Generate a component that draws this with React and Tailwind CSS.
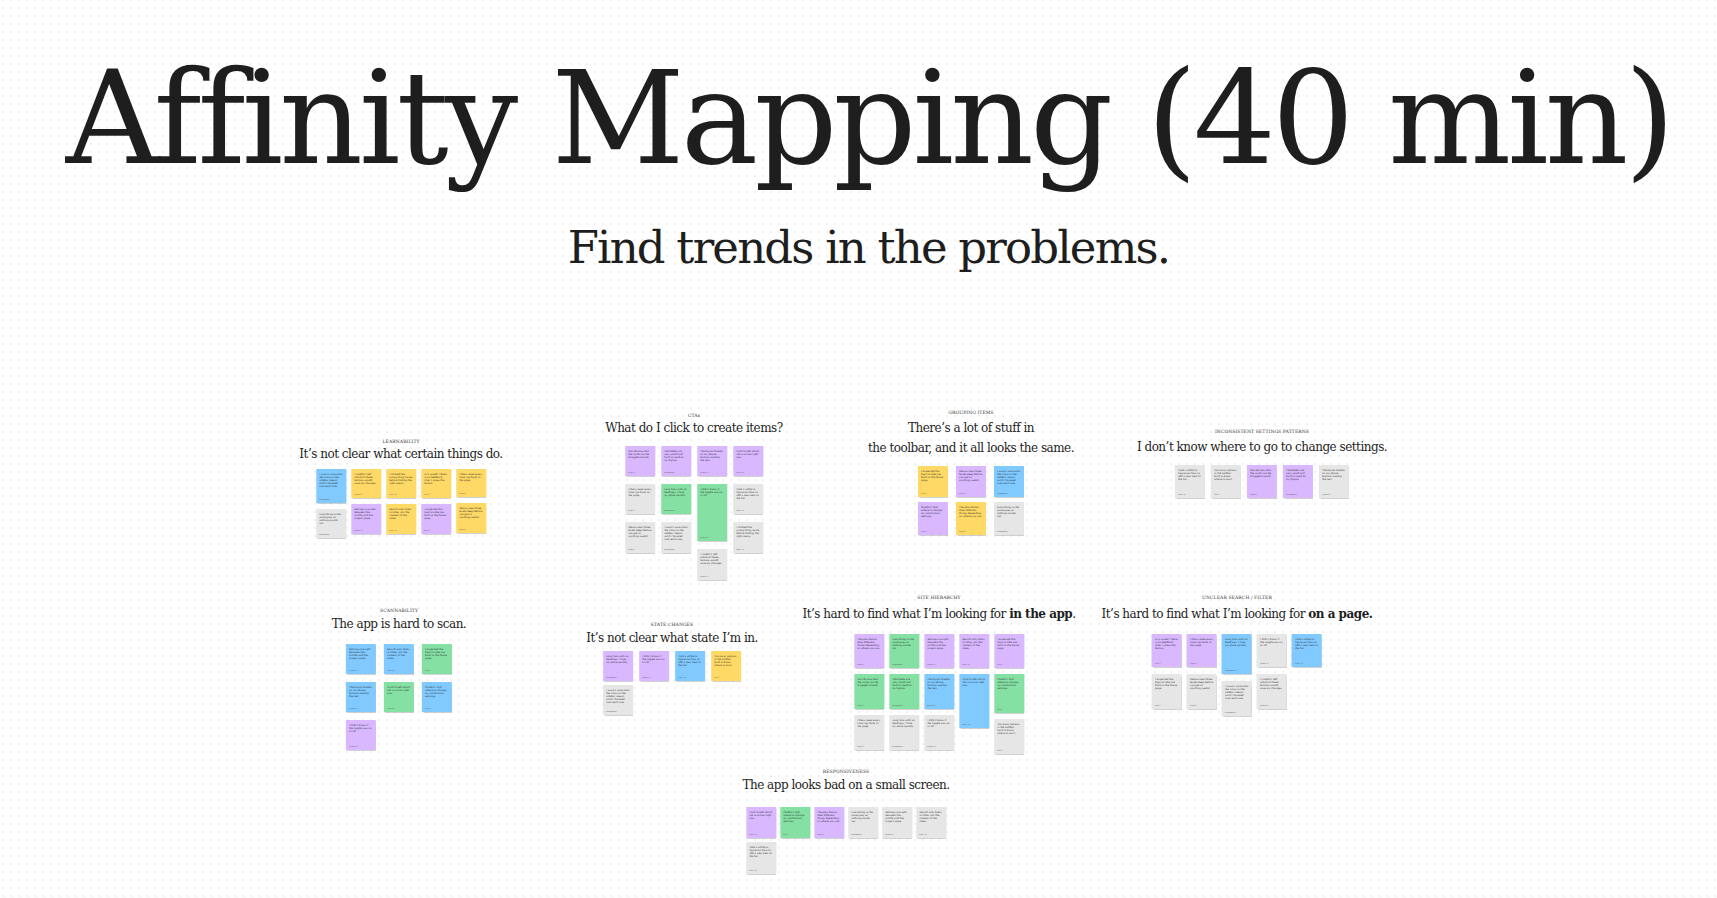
const COLORS = {
  y: 'bg-[#ffd966]',
  b: 'bg-[#80caff]',
  p: 'bg-[#d9b8ff]',
  g: 'bg-[#85e0a3]',
  s: 'bg-[#e6e6e6]',
}

const HEIGHTS = {
  28: 'h-[28px]',
  29: 'h-[29px]',
  30: 'h-[30px]',
  31: 'h-[31px]',
  32: 'h-[32px]',
  33: 'h-[33px]',
  34: 'h-[34px]',
  35: 'h-[35px]',
  39: 'h-[39px]',
  40: 'h-[40px]',
  54: 'h-[54px]',
  57: 'h-[57px]',
}

const NOTES = [
  'I wasn’t sure what the icons in the sidebar meant until I hovered over each one.',
  'Took a while to figure out how to add a new item to the list.',
  'The plus button does different things depending on where you are.',
  'I couldn’t tell which of these buttons would save my changes.',
  'Too many options in the toolbar, hard to know where to start.',
  'Everything is the same grey so nothing stands out.',
  'I clicked the wrong thing twice before finding the right menu.',
  'Not obvious that the cards can be dragged around.',
  'Settings are split between the profile and the project page.',
  'Is it saved? There is no feedback after I press the button.',
  'The labels are very small and hard to read on my laptop.',
  'Search only looks at titles, not the content of the notes.',
  'Filters reset every time I go back to the page.',
  'The layout breaks on my phone, buttons overlap the text.',
  'I expected the logo to take me back to the home page.',
  'Long lists with no headings, I lose my place quickly.',
  'Hard to tell which tab is active right now.',
  'Menus nest three levels deep before you get to anything useful.',
  'I didn’t know if the toggle was on or off.',
  'Couldn’t find where to change my notification settings.',
]

const AUTHORS = ['Anonymous', 'Sam Lee', 'Priya K.', 'Jordan M.', 'Alex T.']

const CLUSTERS = [
  {
    label: 'LEARNABILITY',
    title: ['It’s not clear what certain things do.'],
    pos: 'left-[401px] top-[439px]',
    titleGap: '-mt-[1px]',
    notesGap: 'mt-[5px]',
    gapX: 'gap-[5px]',
    gapY: 'gap-[6px]',
    cols: [['b34', 's29'], ['y29', 'p30'], ['y29', 'y30'], ['y29', 'p30'], ['y28', 'y30']],
  },
  {
    label: 'CTAs',
    title: ['What do I click to create items?'],
    pos: 'left-[694px] top-[413px]',
    titleGap: '-mt-[1px]',
    notesGap: 'mt-[8px]',
    gapX: 'gap-[6px]',
    gapY: 'gap-[8px]',
    cols: [['p30', 's30', 's31'], ['p30', 'g30', 's31'], ['p30', 'g57', 's31'], ['p30', 's30', 's31']],
  },
  {
    label: 'GROUPING ITEMS',
    title: ['There’s a lot of stuff in', 'the toolbar, and it all looks the same.'],
    pos: 'left-[971px] top-[410px]',
    titleGap: 'mt-[2px]',
    notesGap: 'mt-[8px]',
    gapX: 'gap-[8px]',
    gapY: 'gap-[5px]',
    cols: [['y31', 'p33'], ['p31', 'y33'], ['b31', 's33']],
  },
  {
    label: 'INCONSISTENT SETTINGS PATTERNS',
    title: ['I don’t know where to go to change settings.'],
    pos: 'left-[1262px] top-[429px]',
    titleGap: 'mt-[2px]',
    notesGap: 'mt-[8px]',
    gapX: 'gap-[6px]',
    gapY: 'gap-[6px]',
    cols: [['s33'], ['s33'], ['p33'], ['p33'], ['s33']],
  },
  {
    label: 'SCANNABILITY',
    title: ['The app is hard to scan.'],
    pos: 'left-[399px] top-[608px]',
    titleGap: 'mt-0',
    notesGap: 'mt-[10px]',
    gapX: 'gap-[8px]',
    gapY: 'gap-[8px]',
    cols: [['b30', 'b30', 'p30'], ['b30', 'g30'], ['g30', 'b30']],
  },
  {
    label: 'STATE CHANGES',
    title: ['It’s not clear what state I’m in.'],
    pos: 'left-[672px] top-[622px]',
    titleGap: 'mt-0',
    notesGap: 'mt-[3px]',
    gapX: 'gap-[6px]',
    gapY: 'gap-[4px]',
    cols: [['p30', 's30'], ['p30'], ['b30'], ['y30']],
  },
  {
    label: 'SITE HIERARCHY',
    title: [<>It’s hard to find what I’m looking for <b>in the app</b>.</>],
    pos: 'left-[939px] top-[595px]',
    titleGap: 'mt-[3px]',
    notesGap: 'mt-[10px]',
    gapX: 'gap-[5px]',
    gapY: 'gap-[6px]',
    cols: [['p34', 'g35', 's35'], ['g34', 'g35', 's35'], ['p34', 'b35', 's35'], ['p34', 'b54'], ['p34', 'g39', 's35']],
  },
  {
    label: 'UNCLEAR SEARCH / FILTER',
    title: [<>It’s hard to find what I’m looking for <b>on a page.</b></>],
    pos: 'left-[1237px] top-[595px]',
    titleGap: 'mt-[3px]',
    notesGap: 'mt-[10px]',
    gapX: 'gap-[5px]',
    gapY: 'gap-[7px]',
    cols: [['p33', 's35'], ['p33', 's35'], ['b40', 's35'], ['s33', 's35'], ['b33']],
  },
  {
    label: 'RESPONSIVENESS',
    title: ['The app looks bad on a small screen.'],
    pos: 'left-[846px] top-[769px]',
    titleGap: 'mt-0',
    notesGap: 'mt-[12px]',
    gapX: 'gap-[4px]',
    gapY: 'gap-[4px]',
    cols: [['p31', 's32'], ['g31'], ['p31'], ['s31'], ['s31'], ['s31']],
  },
]

function Sticky({ code, seed }) {
  const color = COLORS[code[0]]
  const height = HEIGHTS[Number(code.slice(1))]
  return (
    <div className={`${color} ${height} w-[30px] flex flex-col justify-between px-[3px] pt-[4px] pb-[3px] shadow-[0_0.5px_1px_rgba(0,0,0,0.18)]`}>
      <p className="text-[2.5px] leading-[3px] text-[#222] overflow-hidden">{NOTES[seed % NOTES.length]}</p>
      <span className="text-[1.8px] leading-[2px] text-[#555]">{AUTHORS[seed % AUTHORS.length]}</span>
    </div>
  )
}

function Cluster({ cluster, index }) {
  return (
    <div className={`absolute ${cluster.pos} -translate-x-1/2 flex flex-col items-center`}>
      <span className="text-[4.5px] leading-[6px] tracking-[0.1px] text-[#333] whitespace-nowrap">{cluster.label}</span>
      <h2 className={`${cluster.titleGap} text-[12px] leading-[20px] tracking-[-0.5px] text-[#1e1e1e] text-center whitespace-nowrap`}>
        {cluster.title.map((line, i) => (
          <div key={i}>{line}</div>
        ))}
      </h2>
      <div className={`${cluster.notesGap} ${cluster.gapX} flex items-start`}>
        {cluster.cols.map((col, c) => (
          <div key={c} className={`${cluster.gapY} flex flex-col`}>
            {col.map((code, r) => (
              <Sticky key={r} code={code} seed={index * 7 + c * 3 + r * 5} />
            ))}
          </div>
        ))}
      </div>
    </div>
  )
}

export default function App() {
  return (
    <div className="relative w-full h-[898px] overflow-hidden bg-white bg-[radial-gradient(circle,#e8e8e8_0.6px,transparent_0.9px)] bg-[length:8px_8px] bg-[position:-1px_-4px] font-['DejaVu_Serif',serif]">
      <div className="flex flex-col items-center pt-[53px] pl-[20px]">
        <h1 className="text-[130px] leading-none tracking-[-4px] text-[#1e1e1e] whitespace-nowrap">Affinity Mapping (40 min)</h1>
        <p className="mt-[42px] text-[45px] leading-none tracking-[-1.8px] text-[#1e1e1e]">Find trends in the problems.</p>
      </div>
      {CLUSTERS.map((cluster, i) => (
        <Cluster key={cluster.label} cluster={cluster} index={i} />
      ))}
    </div>
  )
}
